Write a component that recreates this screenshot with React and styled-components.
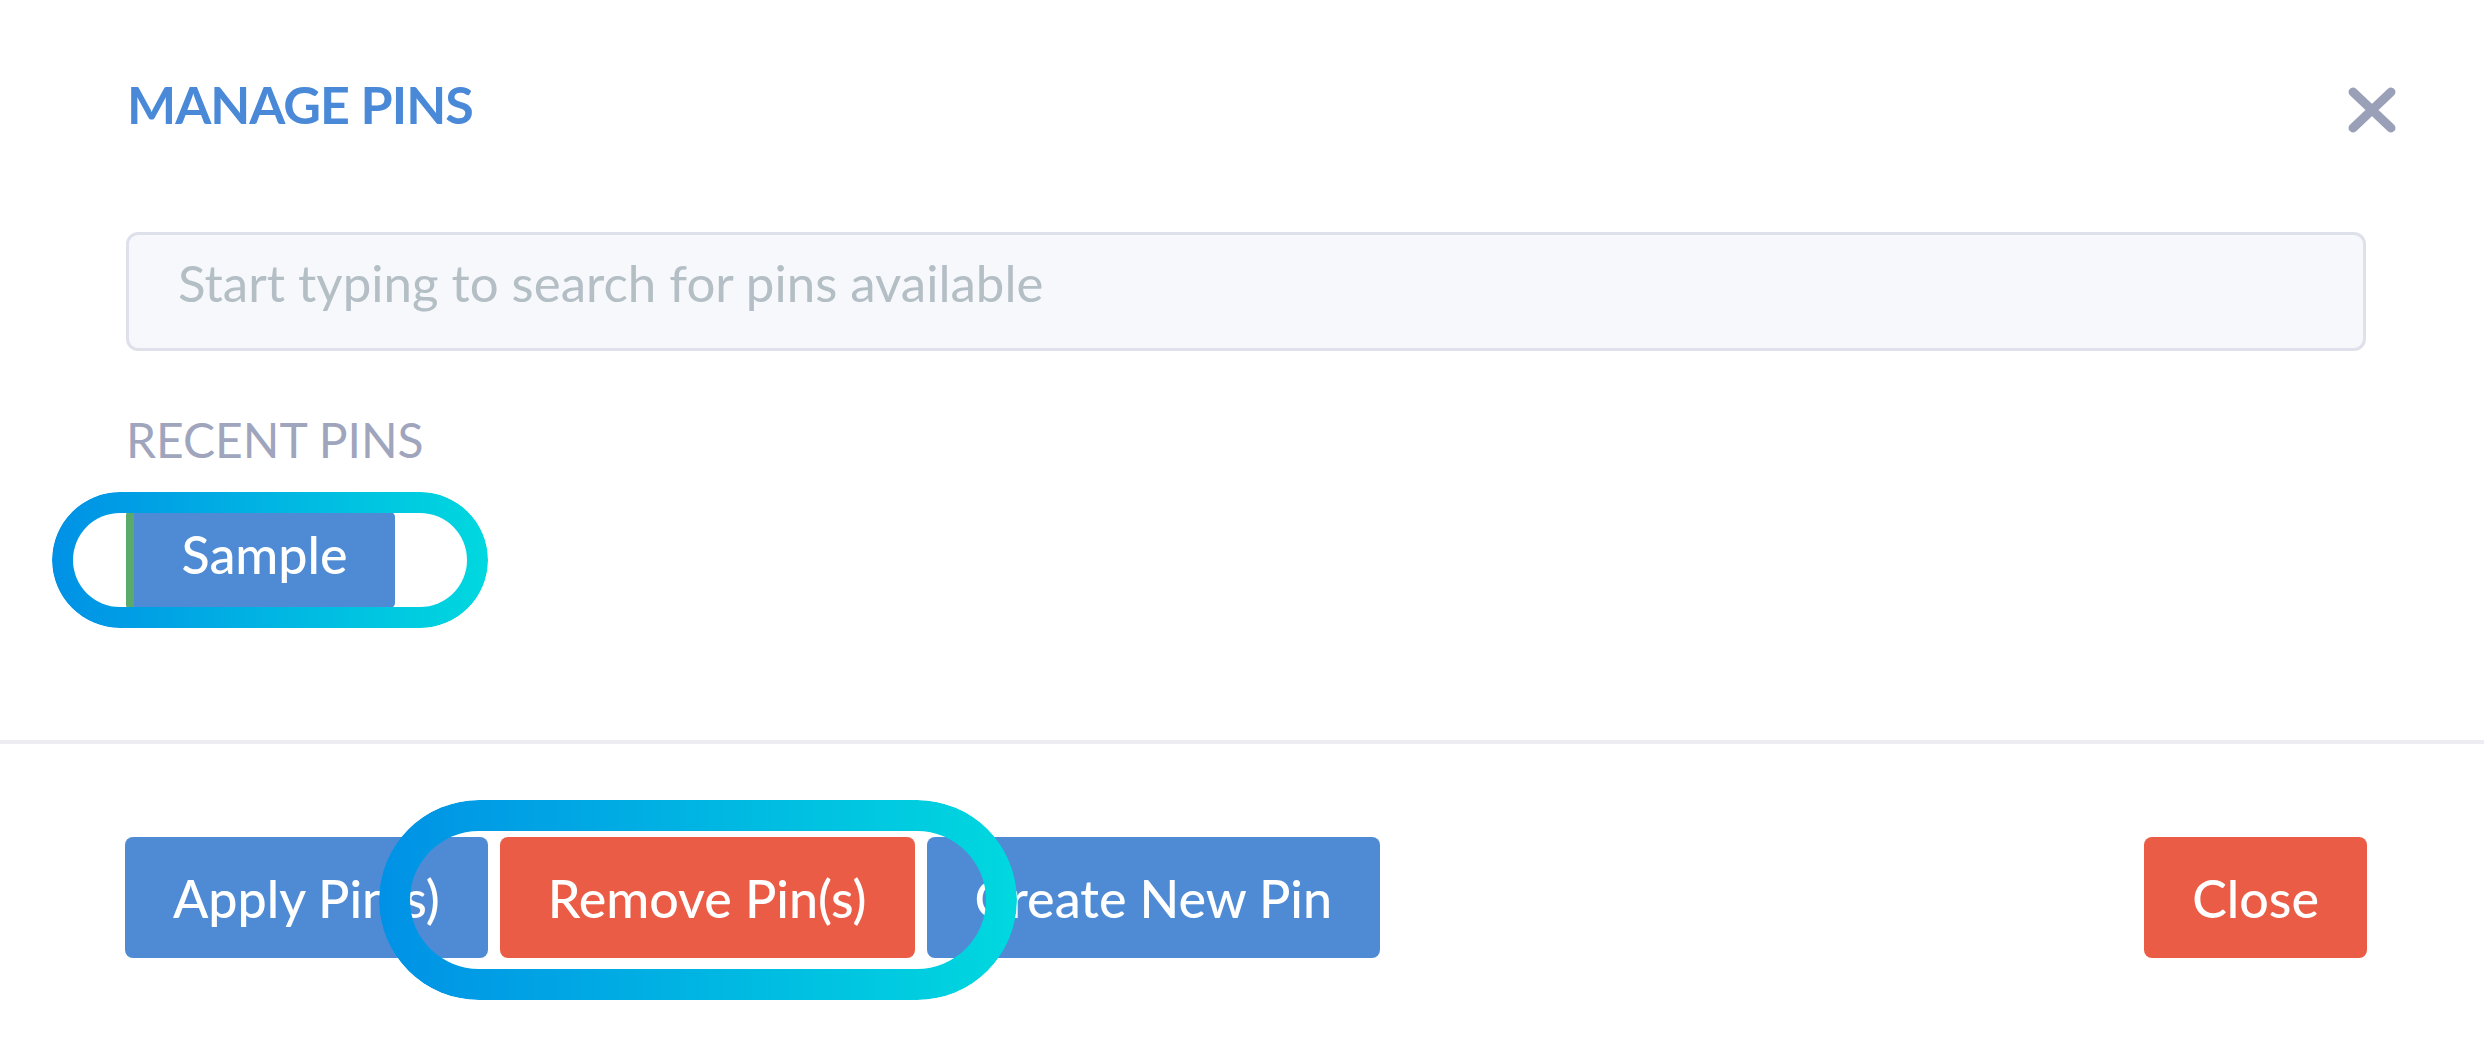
import React from "react";
import styled, { createGlobalStyle } from "styled-components";

const GlobalStyle = createGlobalStyle`
  html, body { margin: 0; padding: 0; background: #ffffff; }
  body { font-family: Lato, "Open Sans", sans-serif; }
  * { box-sizing: border-box; }
`;

const Modal = styled.div`
  width: 2484px;
  height: 1038px;
  background: #ffffff;
  display: flex;
  flex-direction: column;
`;

const Header = styled.div`
  display: flex;
  justify-content: space-between;
  align-items: flex-start;
  padding: 72px 88px 0 127px;
`;

const Title = styled.h2`
  margin: 0;
  font-family: Lato, sans-serif;
  font-weight: 700;
  font-size: 52px;
  letter-spacing: -1px;
  line-height: 64px;
  color: #4a89d7;
`;

const CloseIcon = styled.button`
  margin-top: 15px;
  width: 48px;
  height: 46px;
  padding: 0;
  border: 0;
  background: transparent;
  display: flex;
  cursor: pointer;
`;

const Body = styled.div`
  padding: 0 118px 0 126px;
  margin-top: 96px;
`;

const Search = styled.input`
  display: block;
  width: 100%;
  height: 119px;
  border: 3px solid #dfe1ea;
  border-radius: 12px;
  background: #f6f8fb;
  padding: 0 49px 18px 49px;
  font-family: Lato, sans-serif;
  font-size: 51px;
  color: #333;
  outline: none;
  &::placeholder { color: #b3bec5; }
`;

const SectionLabel = styled.div`
  margin-top: 60px;
  font-family: Lato, sans-serif;
  font-size: 48px;
  line-height: 58px;
  color: #9fa5bd;
`;

const TagRow = styled.div`
  margin-top: 43px;
  display: flex;
`;

const Highlight = styled.span`
  position: relative;
  display: inline-flex;
`;

const Ring = styled.span`
  position: absolute;
  left: ${(p) => p.$left}px;
  top: ${(p) => p.$top}px;
  width: ${(p) => p.$w}px;
  height: ${(p) => p.$h}px;
  border: ${(p) => p.$stroke}px solid transparent;
  border-radius: ${(p) => p.$h / 2}px;
  background: linear-gradient(90deg, #0091e6, #00d8df) border-box;
  -webkit-mask: linear-gradient(#000 0 0) padding-box, linear-gradient(#000 0 0);
  -webkit-mask-composite: xor;
  mask: linear-gradient(#000 0 0) padding-box exclude, linear-gradient(#000 0 0);
  pointer-events: none;
  z-index: 2;
`;

const Tag = styled.span`
  height: 96px;
  width: 269px;
  display: inline-flex;
  align-items: center;
  justify-content: center;
  padding: 0 0 12px 0;
  background: #4f8bd4;
  border-left: 8px solid #5aab6b;
  border-radius: 3px 5px 5px 3px;
  color: #ffffff;
  font-family: Lato, sans-serif;
  font-size: 52px;
  font-weight: 500;
`;

const Divider = styled.hr`
  margin: 132px 0 0 0;
  border: 0;
  height: 4px;
  background: #ececf2;
`;

const Footer = styled.div`
  display: flex;
  justify-content: space-between;
  align-items: center;
  padding: 93px 117px 0 125px;
`;

const ButtonGroup = styled.div`
  display: flex;
  gap: 12px;
`;

const Button = styled.button`
  height: 121px;
  padding: 0 48px;
  border: 0;
  border-radius: 8px;
  background: ${(p) => (p.$danger ? "#eb5c46" : "#4f8bd4")};
  color: #ffffff;
  font-family: Lato, sans-serif;
  font-size: 52px;
  font-weight: 500;
  white-space: nowrap;
  cursor: pointer;
`;

export default function App() {
  return (
    <>
      <GlobalStyle />
      <Modal>
        <Header>
          <Title>MANAGE PINS</Title>
          <CloseIcon aria-label="Close">
            <svg width="48" height="46" viewBox="0 0 48 46">
              <path d="M5 5 L43 41 M43 5 L5 41" stroke="#9aa0b8" strokeWidth="9" strokeLinecap="round" />
            </svg>
          </CloseIcon>
        </Header>
        <Body>
          <Search placeholder="Start typing to search for pins available" />
          <SectionLabel>RECENT PINS</SectionLabel>
          <TagRow>
            <Highlight>
              <Tag>Sample</Tag>
              <Ring $left={-74} $top={-20} $w={436} $h={136} $stroke={21} />
            </Highlight>
          </TagRow>
        </Body>
        <Divider />
        <Footer>
          <ButtonGroup>
            <Button>Apply Pin(s)</Button>
            <Highlight>
              <Button $danger>Remove Pin(s)</Button>
              <Ring $left={-121} $top={-37} $w={638} $h={200} $stroke={31} />
            </Highlight>
            <Button>Create New Pin</Button>
          </ButtonGroup>
          <Button $danger>Close</Button>
        </Footer>
      </Modal>
    </>
  );
}
